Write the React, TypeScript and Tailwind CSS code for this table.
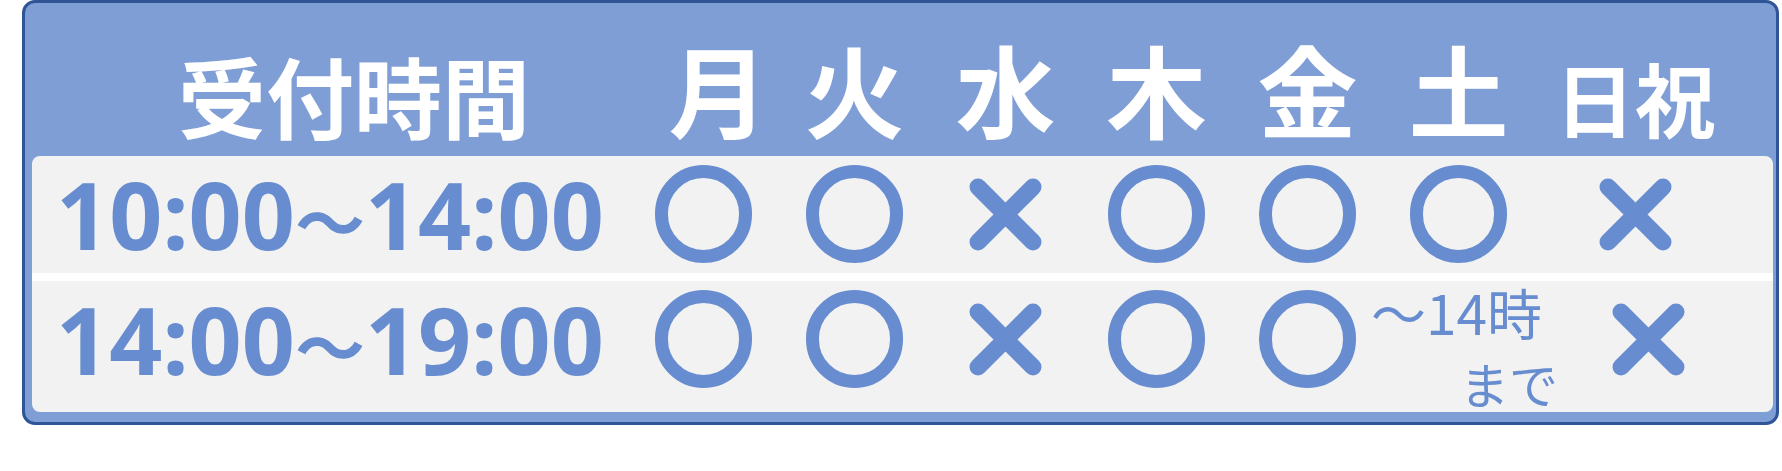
const font = "font-['Noto_Sans_CJK_JP','Noto_Sans',sans-serif]";

const Circle = () => <div className="w-[97px] h-[98px] rounded-full border-[13px] border-[#678dd0]" />;

const Cross = () => (
  <svg width="73" height="73" viewBox="0 0 73 73">
    <path d="M9 9 L64 64 M64 9 L9 64" stroke="#678dd0" strokeWidth="17" strokeLinecap="round" />
  </svg>
);

const cols = "grid grid-cols-[596px_repeat(6,151px)_202px]";

type Mark = "o" | "x" | "note";

const rows: { from: string; to: string; marks: Mark[]; height: string }[] = [
  { from: "10:00", to: "14:00", marks: ["o", "o", "x", "o", "o", "o", "x"], height: "h-[117px]" },
  { from: "14:00", to: "19:00", marks: ["o", "o", "x", "o", "o", "note", "x"], height: "h-[131px]" },
];

const days = ["月", "火", "水", "木", "金", "土"];

export default function App() {
  return (
    <div className={`bg-white w-[1782px] h-[471px] ${font}`}>
      <div className="ml-[22px] w-[1757px] h-[425px] rounded-[13px] border-[3px] border-[#2f5597] bg-[#7f9ed6] pl-[7px] pr-[3px] flex flex-col">
        {/* header */}
        <div className={`${cols} h-[153px] items-end pb-[18px] text-white font-bold leading-none`}>
          <div className="text-[88px] pl-[146px] whitespace-nowrap">受付時間</div>
          {days.map((d, i) => (
            <div key={d} className={`text-[100px] text-center ${i === 0 ? "pl-[30px]" : ""}`}>
              {d}
            </div>
          ))}
          <div className="text-[80px] text-center pb-[2px]">日祝</div>
        </div>

        {/* body */}
        <div className="bg-[#f2f2f2] rounded-[8px] flex flex-col">
          {rows.map((r, ri) => (
            <div key={r.from}>
              {ri > 0 && <div className="h-[8px] bg-white" />}
              <div className={`${cols} ${r.height}`}>
                <div className="pl-[24px] pt-[12px] text-[93px] font-bold leading-none text-[#678dd0] whitespace-nowrap font-['Noto_Sans','Noto_Sans_CJK_JP',sans-serif]">
                  {r.from}
                  <span className="text-[70px] font-['Noto_Sans_CJK_JP',sans-serif]">〜</span>
                  {r.to}
                </div>
                {r.marks.map((m, i) => {
                  if (m === "note") {
                    return (
                      <div key={i} className="pt-[3px]">
                        <div className="ml-[-12px] w-[210px] text-[#678dd0] font-normal leading-none whitespace-nowrap">
                          <div className="text-[55px]">〜14時</div>
                          <div className="text-[49px] pl-[89px] pt-[19px]">まで</div>
                        </div>
                      </div>
                    );
                  }
                  return (
                    <div
                      key={i}
                      className={`flex justify-center ${m === "x" ? "pt-[22px]" : "pt-[9px]"} ${
                        ri === 1 && i === 6 ? "pl-[26px]" : ""
                      }`}
                    >
                      {m === "o" ? <Circle /> : <Cross />}
                    </div>
                  );
                })}
              </div>
            </div>
          ))}
        </div>
      </div>
    </div>
  );
}
